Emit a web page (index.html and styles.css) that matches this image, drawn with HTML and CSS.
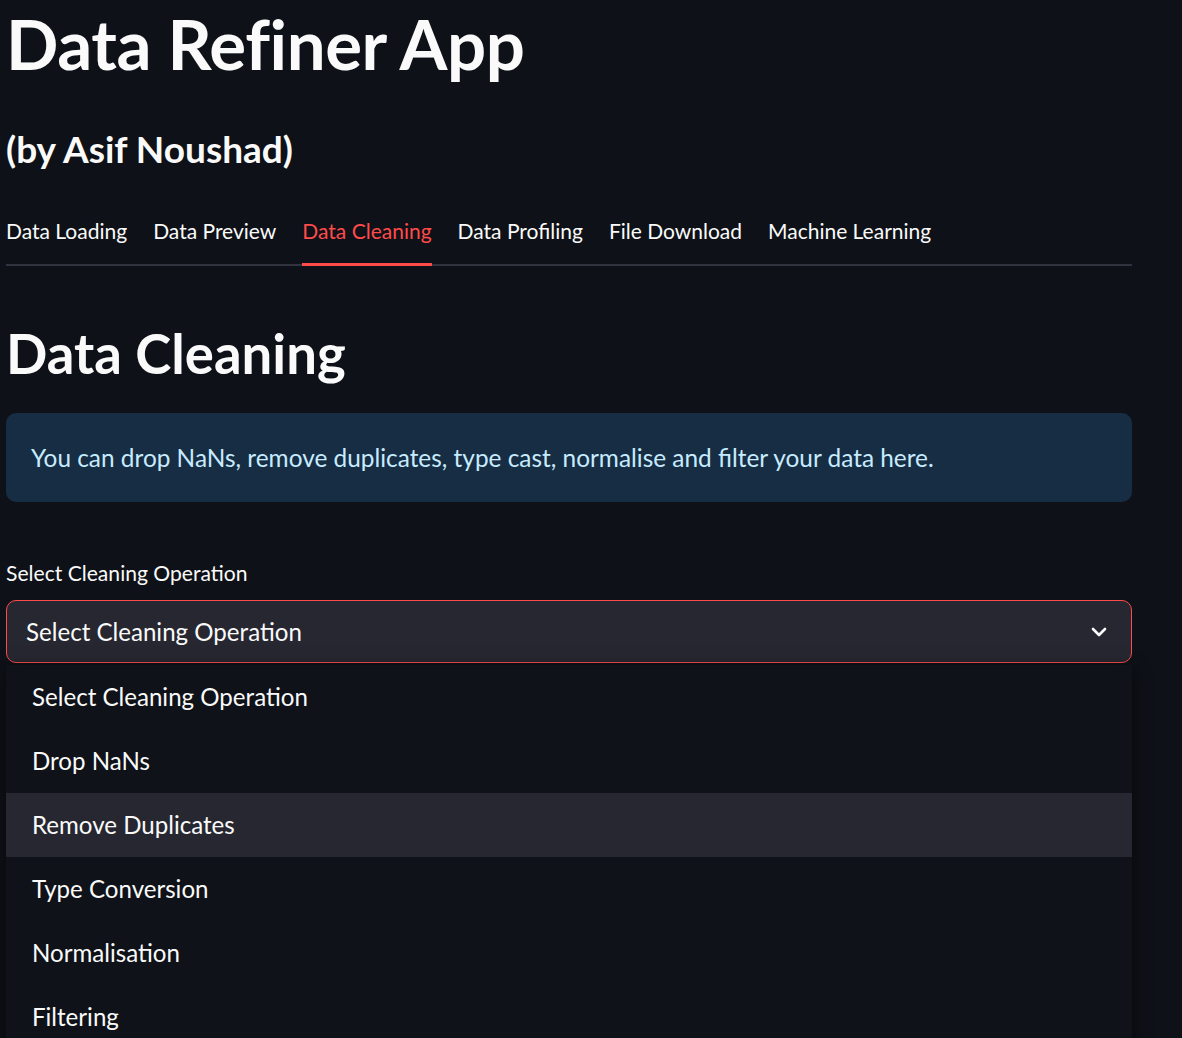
FILE: index.html
```html
<!DOCTYPE html>
<html>
<head>
<meta charset="utf-8">
<link rel="stylesheet" href="styles.css">
</head>
<body>
<main class="main">
  <h1 class="title">Data Refiner App</h1>
  <h3 class="subtitle">(by Asif Noushad)</h3>
  <nav class="tabs">
    <span class="tab">Data Loading</span>
    <span class="tab">Data Preview</span>
    <span class="tab active">Data Cleaning</span>
    <span class="tab">Data Profiling</span>
    <span class="tab">File Download</span>
    <span class="tab">Machine Learning</span>
  </nav>
  <h2 class="section">Data Cleaning</h2>
  <div class="info">You can drop NaNs, remove duplicates, type cast, normalise and filter your data here.</div>
  <label class="label">Select Cleaning Operation</label>
  <div class="selectwrap">
    <div class="select">
      <span class="value">Select Cleaning Operation</span>
      <svg class="chev" width="16" height="10" viewBox="0 0 16 10"><path d="M2 2 L8 8 L14 2" fill="none" stroke="#fafafa" stroke-width="2.6" stroke-linecap="round" stroke-linejoin="round"/></svg>
    </div>
    <ul class="menu">
      <li class="opt">Select Cleaning Operation</li>
      <li class="opt">Drop NaNs</li>
      <li class="opt hover">Remove Duplicates</li>
      <li class="opt">Type Conversion</li>
      <li class="opt">Normalisation</li>
      <li class="opt">Filtering</li>
    </ul>
  </div>
</main>
</body>
</html>
```
FILE: styles.css
```css
html, body {
  margin: 0;
  padding: 0;
  background: #0e1117;
  color: #fafafa;
  font-family: Lato, "Source Sans Pro", sans-serif;
  height: 1038px;
  overflow: hidden;
}
.main {
  width: 1126px;
  padding: 0 0 0 6px;
}
.title {
  margin: 0;
  padding-top: 2px;
  font-size: 69px;
  line-height: 84px;
  font-weight: 700;
  letter-spacing: -0.4px;
}
.subtitle {
  margin: 0;
  padding-top: 39px;
  font-size: 37px;
  line-height: 48px;
  font-weight: 700;
}
.tabs {
  display: flex;
  gap: 26px;
  margin-top: 40px;
  border-bottom: 2px solid #31333f;
  height: 51px;
  box-sizing: content-box;
}
.tab {
  font-size: 21px;
  line-height: 36px;
  position: relative;
  white-space: nowrap;
}
.tab.active {
  color: #ff4b4b;
}
.tab.active::after {
  content: "";
  position: absolute;
  left: 0;
  right: 0;
  top: 50px;
  height: 3px;
  background: #ff4b4b;
}
.section {
  margin: 0;
  padding-top: 53px;
  font-size: 54.5px;
  line-height: 68px;
  font-weight: 700;
}
.info {
  margin-top: 26px;
  background: #172d43;
  color: #c7ebff;
  border-radius: 10px;
  padding: 0 25px;
  height: 89px;
  line-height: 89px;
  font-size: 24.4px;
}
.label {
  display: block;
  margin-top: 57px;
  font-size: 21.1px;
  line-height: 28px;
}
.selectwrap {
  position: relative;
  margin-top: 13px;
}
.select {
  height: 61px;
  border: 1px solid #ff4b4b;
  border-radius: 10px;
  background: #262730;
  display: flex;
  align-items: center;
  justify-content: space-between;
  padding: 0 24px 0 19px;
  font-size: 24.1px;
}
.chev {
  display: block;
}
.menu {
  list-style: none;
  margin: 0;
  padding: 0;
  position: absolute;
  left: 0;
  right: 0;
  top: 65px;
  background: #0f1218;
  box-shadow: 0 4px 16px rgba(0,0,0,0.6);
}
.opt {
  height: 64px;
  line-height: 64px;
  padding-left: 26px;
  font-size: 24.1px;
  color: #fafafa;
}
.opt.hover {
  background: #262730;
}
```
